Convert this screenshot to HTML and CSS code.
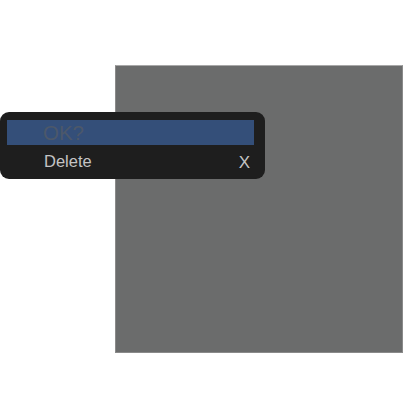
FILE: index.html
```html
<!DOCTYPE html>
<html>
<head>
<meta charset="utf-8">
<link rel="stylesheet" href="styles.css">
</head>
<body>
<div class="canvas"></div>
<div class="menu">
  <div class="menu-title">OK?</div>
  <div class="menu-item">
    <span class="label">Delete</span>
    <span class="shortcut">X</span>
  </div>
</div>
</body>
</html>
```
FILE: styles.css
```css
html, body {
  margin: 0;
  padding: 0;
  background: #ffffff;
  width: 420px;
  height: 420px;
  overflow: hidden;
  font-family: "Liberation Sans", Arial, sans-serif;
}
.canvas {
  margin: 65px 0 0 115px;
  width: 286px;
  height: 286px;
  background: #6b6c6c;
  border: 1px solid #8a8a8a;
  border-top-color: #a8a8a8;
}
.menu {
  position: absolute;
  left: 0;
  top: 112px;
  width: 265px;
  height: 67px;
  box-sizing: border-box;
  padding: 8px 11px 0 7px;
  background: #1e1e1e;
  border-radius: 9px;
  display: flex;
  flex-direction: column;
}
.menu-title {
  height: 25px;
  background: #344f79;
  color: #4c586a;
  font-size: 20.5px;
  line-height: 26px;
  padding-left: 36px;
  box-sizing: border-box;
}
.menu-item {
  flex: 1;
  display: flex;
  align-items: center;
  justify-content: space-between;
  padding: 0 4px 2px 37px;
  color: #c4c4c4;
  font-size: 16.5px;
}
.shortcut {
  font-size: 17px;
  padding-top: 3px;
}
```
